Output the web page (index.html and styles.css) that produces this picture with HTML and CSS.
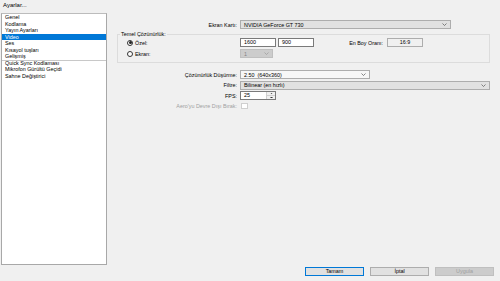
FILE: index.html
```html
<!DOCTYPE html>
<html lang="tr">
<head>
<meta charset="utf-8">
<title>Ayarlar...</title>
<link rel="stylesheet" href="styles.css">
</head>
<body>
  <div class="window">
    <div class="title">Ayarlar...</div>
    <div class="main">
      <ul class="nav">
        <li>Genel</li>
        <li>Kodlama</li>
        <li>Yayın Ayarları</li>
        <li class="on">Video</li>
        <li>Ses</li>
        <li>Kısayol tuşları</li>
        <li>Gelişmiş</li>
        <li class="sep">Quick Sync Kodlaması</li>
        <li>Mikrofon Gürültü Geçidi</li>
        <li>Sahne Değiştirici</li>
      </ul>

      <div class="panel">
        <div class="form first">
          <label>Ekran Kartı:</label>
          <div class="combo card"><span>NVIDIA GeForce GT 730</span><svg viewBox="0 0 5 3"><path d="M0.5 0.5L2.5 2.5L4.5 0.5"/></svg></div>
        </div>

        <fieldset class="group">
          <legend>Temel Çözünürlük:</legend>
          <div class="grow">
            <label class="radio"><span class="dot checked"></span>Özel:</label>
            <div class="edit w36">1600</div>
            <div class="edit w36 ml2">900</div>
            <label class="aspect">En Boy Oranı:</label>
            <div class="edit ratio">16:9</div>
          </div>
          <div class="grow">
            <label class="radio"><span class="dot"></span>Ekran:</label>
            <div class="combo off mon"><span>1</span><svg viewBox="0 0 5 3"><path d="M0.5 0.5L2.5 2.5L4.5 0.5"/></svg></div>
          </div>
        </fieldset>

        <div class="form second">
          <label>Çözünürlük Düşürme:</label>
          <div class="combo light down"><span>2.50&nbsp;&nbsp;(640x360)</span><svg viewBox="0 0 5 3"><path d="M0.5 0.5L2.5 2.5L4.5 0.5"/></svg></div>

          <label>Filtre:</label>
          <div class="combo filter"><span>Bilinear (en hızlı)</span><svg viewBox="0 0 5 3"><path d="M0.5 0.5L2.5 2.5L4.5 0.5"/></svg></div>

          <label>FPS:</label>
          <div class="spin">
            <div class="spin-val">25</div>
            <div class="spin-btns">
              <span><svg viewBox="0 0 4 2"><path d="M0 2L2 0L4 2Z"/></svg></span>
              <span><svg viewBox="0 0 4 2"><path d="M0 0L2 2L4 0Z"/></svg></span>
            </div>
          </div>

          <label class="dim">Aero'yu Devre Dışı Bırak:</label>
          <div class="check"></div>
        </div>

        <div class="buttons">
          <button class="btn focus">Tamam</button>
          <button class="btn">İptal</button>
          <button class="btn disabled">Uygula</button>
        </div>
      </div>
    </div>
  </div>
</body>
</html>
```

FILE: styles.css
```css
* {margin:0;padding:0;box-sizing:border-box}
ul,li {list-style:none}
html,body {width:500px;height:281px;overflow:hidden}
body {background:#f0f0f0;font-family:"Liberation Sans",Arial,sans-serif;font-size:5.4px;color:#000}

.window {display:flex;flex-direction:column;height:281px}
.title {height:13px;line-height:10px;padding-left:3px;font-size:6px}

.main {display:flex;height:268px}

.nav {width:106px;height:252px;margin-left:1px;background:#fff;border:1px solid #a8a8a8;border-top-color:#bcbcbc;padding-top:0}
.nav li {height:6.5px;line-height:6.5px;padding-left:3px;white-space:nowrap;overflow:hidden}
.nav li.on {background:#0078d7;color:#fff}
.nav li.sep {border-top:1px solid #c8c8c8;line-height:5.5px}

.panel {flex:1;display:flex;flex-direction:column}

.form {display:grid;grid-template-columns:130px 1fr;column-gap:3px;align-items:center}
.form label {text-align:right;white-space:nowrap}
.form.first {margin-top:7px;grid-auto-rows:9px}
.form.second {margin-top:7px;grid-auto-rows:9px;row-gap:1.5px}
.dim {color:#a0a0a0}

.combo {display:flex;align-items:center;justify-content:space-between;height:9px;padding:0 3px 0 3px;background:#e1e1e1;border:1px solid #adadad;white-space:nowrap}
.combo svg {width:5px;height:3px;fill:none;stroke:#555;stroke-width:0.7}
.combo.card {width:211px}
.combo.light {background:#f7f7f7}
.combo.down {width:130px}
.combo.filter {width:250px}
.combo.off {background:#cccccc;border-color:#bfbfbf;color:#838383}
.combo.off svg {stroke:#9a9a9a}
.combo.mon {width:33px}

.group {margin:1.5px 0 0 10px;width:373px;border:1px solid #dcdcdc;padding:0.5px 0 4px 0}
.group legend {margin-left:2px;padding:0 1px;line-height:7px}
.grow {display:flex;align-items:center;height:9px}
.grow + .grow {margin-top:2px}
.radio {width:122px;display:flex;align-items:center;padding-left:9px;gap:2px}
.dot {width:6px;height:6px;border:0.8px solid #333;border-radius:50%;background:#fff;display:flex;align-items:center;justify-content:center}
.dot.checked::after {content:"";width:3px;height:3px;border-radius:50%;background:#222}

.edit {height:9px;line-height:7px;padding-left:3px;background:#fff;border:1px solid #7a7a7a}
.w36 {width:36px}
.ml2 {margin-left:2px}
.aspect {flex:1;text-align:right;padding-right:4px}
.edit.ratio {width:36px;text-align:center;padding-left:0;background:#f0f0f0;border-color:#adadad;margin-right:66px}

.spin {display:flex;width:36px;height:9px;border:1px solid #7a7a7a;background:#fff}
.spin-val {flex:1;line-height:7px;padding-left:3px}
.spin-btns {width:9px;display:flex;flex-direction:column;border-left:1px solid #d0d0d0}
.spin-btns span {flex:1;display:flex;align-items:center;justify-content:center;background:#f0f0f0}
.spin-btns span + span {border-top:1px solid #d0d0d0}
.spin-btns svg {width:3px;height:1.6px;fill:#333}

.check {width:7px;height:6px;border:1px solid #cfcfcf;background:#fff;margin-left:1px}

.buttons {margin-top:auto;margin-bottom:5px;display:flex;justify-content:flex-end;gap:6px;padding-right:6px}
.btn {width:59px;height:9px;font:inherit;background:#e1e1e1;border:1px solid #adadad;color:#000;line-height:7px}
.btn.focus {border-color:#0078d7}
.btn.disabled {background:#cccccc;border-color:#bfbfbf;color:#a0a0a0}
```
